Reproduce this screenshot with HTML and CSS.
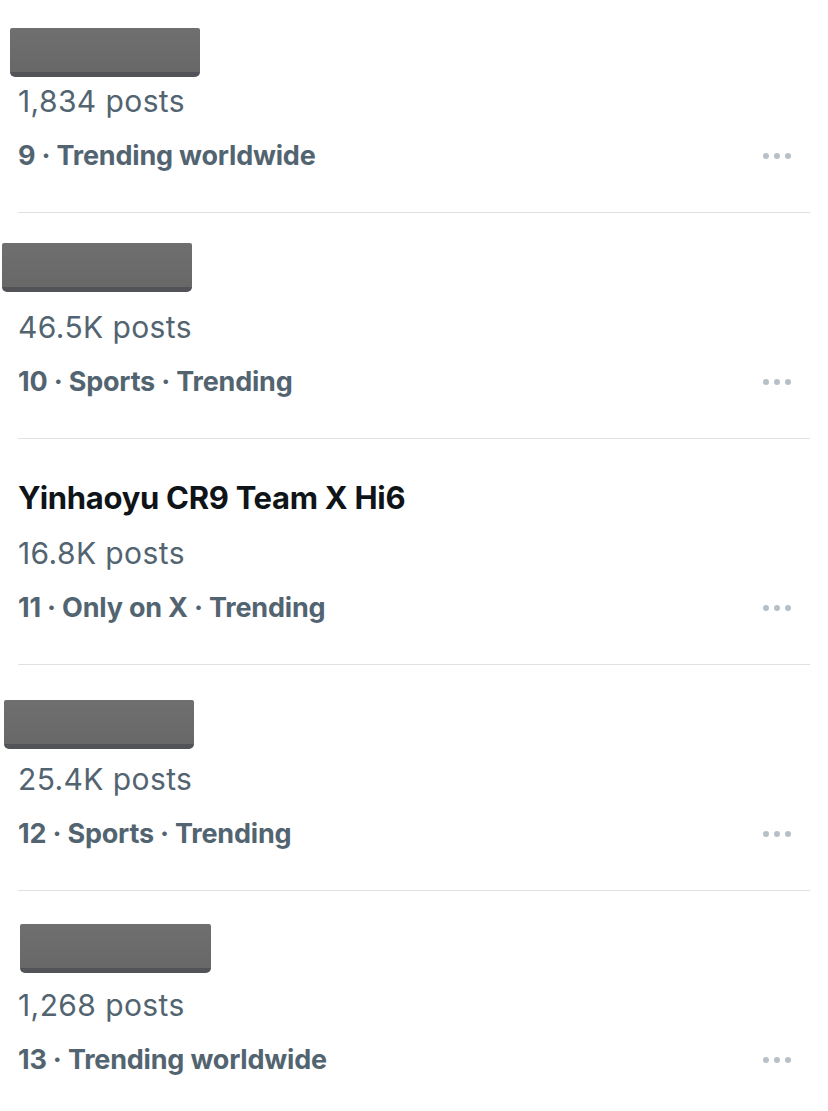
FILE: index.html
```html
<!DOCTYPE html>
<html lang="en">
<head>
  <meta charset="UTF-8">
  <meta name="viewport" content="width=device-width, initial-scale=1.0">
  <title>Trending</title>
  <link rel="stylesheet" href="styles.css">
</head>
<body>

  <div class="trends">

    <!-- 9 -->
    <div class="trend">
      <div class="redacted r1"></div>
      <div class="trend-title">&nbsp;</div>
      <div class="trend-posts">1,834 posts</div>
      <div class="trend-meta">
        <span>9 · Trending worldwide</span>
        <span class="more"><svg width="28" height="6" viewBox="0 0 28 6"><circle cx="3" cy="3" r="3"/><circle cx="14" cy="3" r="3"/><circle cx="25" cy="3" r="3"/></svg></span>
      </div>
    </div>

    <!-- 10 -->
    <div class="trend">
      <div class="redacted r2"></div>
      <div class="trend-title">&nbsp;</div>
      <div class="trend-posts">46.5K posts</div>
      <div class="trend-meta">
        <span>10 · Sports · Trending</span>
        <span class="more"><svg width="28" height="6" viewBox="0 0 28 6"><circle cx="3" cy="3" r="3"/><circle cx="14" cy="3" r="3"/><circle cx="25" cy="3" r="3"/></svg></span>
      </div>
    </div>

    <!-- 11 -->
    <div class="trend">
      <div class="trend-title">Yinhaoyu CR9 Team X Hi6</div>
      <div class="trend-posts">16.8K posts</div>
      <div class="trend-meta">
        <span>11 · Only on X · Trending</span>
        <span class="more"><svg width="28" height="6" viewBox="0 0 28 6"><circle cx="3" cy="3" r="3"/><circle cx="14" cy="3" r="3"/><circle cx="25" cy="3" r="3"/></svg></span>
      </div>
    </div>

    <!-- 12 -->
    <div class="trend">
      <div class="redacted r4"></div>
      <div class="trend-title">&nbsp;</div>
      <div class="trend-posts">25.4K posts</div>
      <div class="trend-meta">
        <span>12 · Sports · Trending</span>
        <span class="more"><svg width="28" height="6" viewBox="0 0 28 6"><circle cx="3" cy="3" r="3"/><circle cx="14" cy="3" r="3"/><circle cx="25" cy="3" r="3"/></svg></span>
      </div>
    </div>

    <!-- 13 -->
    <div class="trend">
      <div class="redacted r5"></div>
      <div class="trend-title">&nbsp;</div>
      <div class="trend-posts">1,268 posts</div>
      <div class="trend-meta">
        <span>13 · Trending worldwide</span>
        <span class="more"><svg width="28" height="6" viewBox="0 0 28 6"><circle cx="3" cy="3" r="3"/><circle cx="14" cy="3" r="3"/><circle cx="25" cy="3" r="3"/></svg></span>
      </div>
    </div>

  </div>

</body>
</html>
```

FILE: styles.css
```css
body {
  font-family: Inter, "Noto Sans", "Liberation Sans", sans-serif;
  background: #fff;
  margin: 0;
  color: #0f1419;
}
.trends {
  padding: 0 18px;
}
.trend {
  position: relative;
  padding: 31px 0 29px;
  border-bottom: 1px solid #dfe2e5;
}
.trend:first-child {
  padding-top: 18px;
}
.trend:last-child {
  border-bottom: none;
}
.trend-title {
  font-size: 31px;
  font-weight: 700;
  line-height: 56px;
  letter-spacing: -0.3px;
}
.trend-posts {
  font-size: 30px;
  line-height: 55px;
  letter-spacing: 0.4px;
  color: #536471;
}
.trend-meta {
  display: flex;
  justify-content: space-between;
  align-items: center;
  font-size: 27px;
  font-weight: 700;
  line-height: 54px;
  letter-spacing: -0.2px;
  color: #536471;
}
.more {
  display: flex;
  padding-right: 19px;
}
.more svg {
  fill: #b8c0c7;
}

/* grey boxes hiding the trend names */
.redacted {
  position: absolute;
  width: 190px;
  height: 44px;
  background: linear-gradient(#6f6f6f, #686868);
  border-bottom: 5px solid #525359;
  border-radius: 2px 2px 5px 5px;
}
.r1 { top: 28px; left: -8px; }
.r2 { top: 30px; left: -16px; }
.r4 { top: 35px; left: -14px; }
.r5 { top: 33px; left: 2px; width: 191px; }
```
